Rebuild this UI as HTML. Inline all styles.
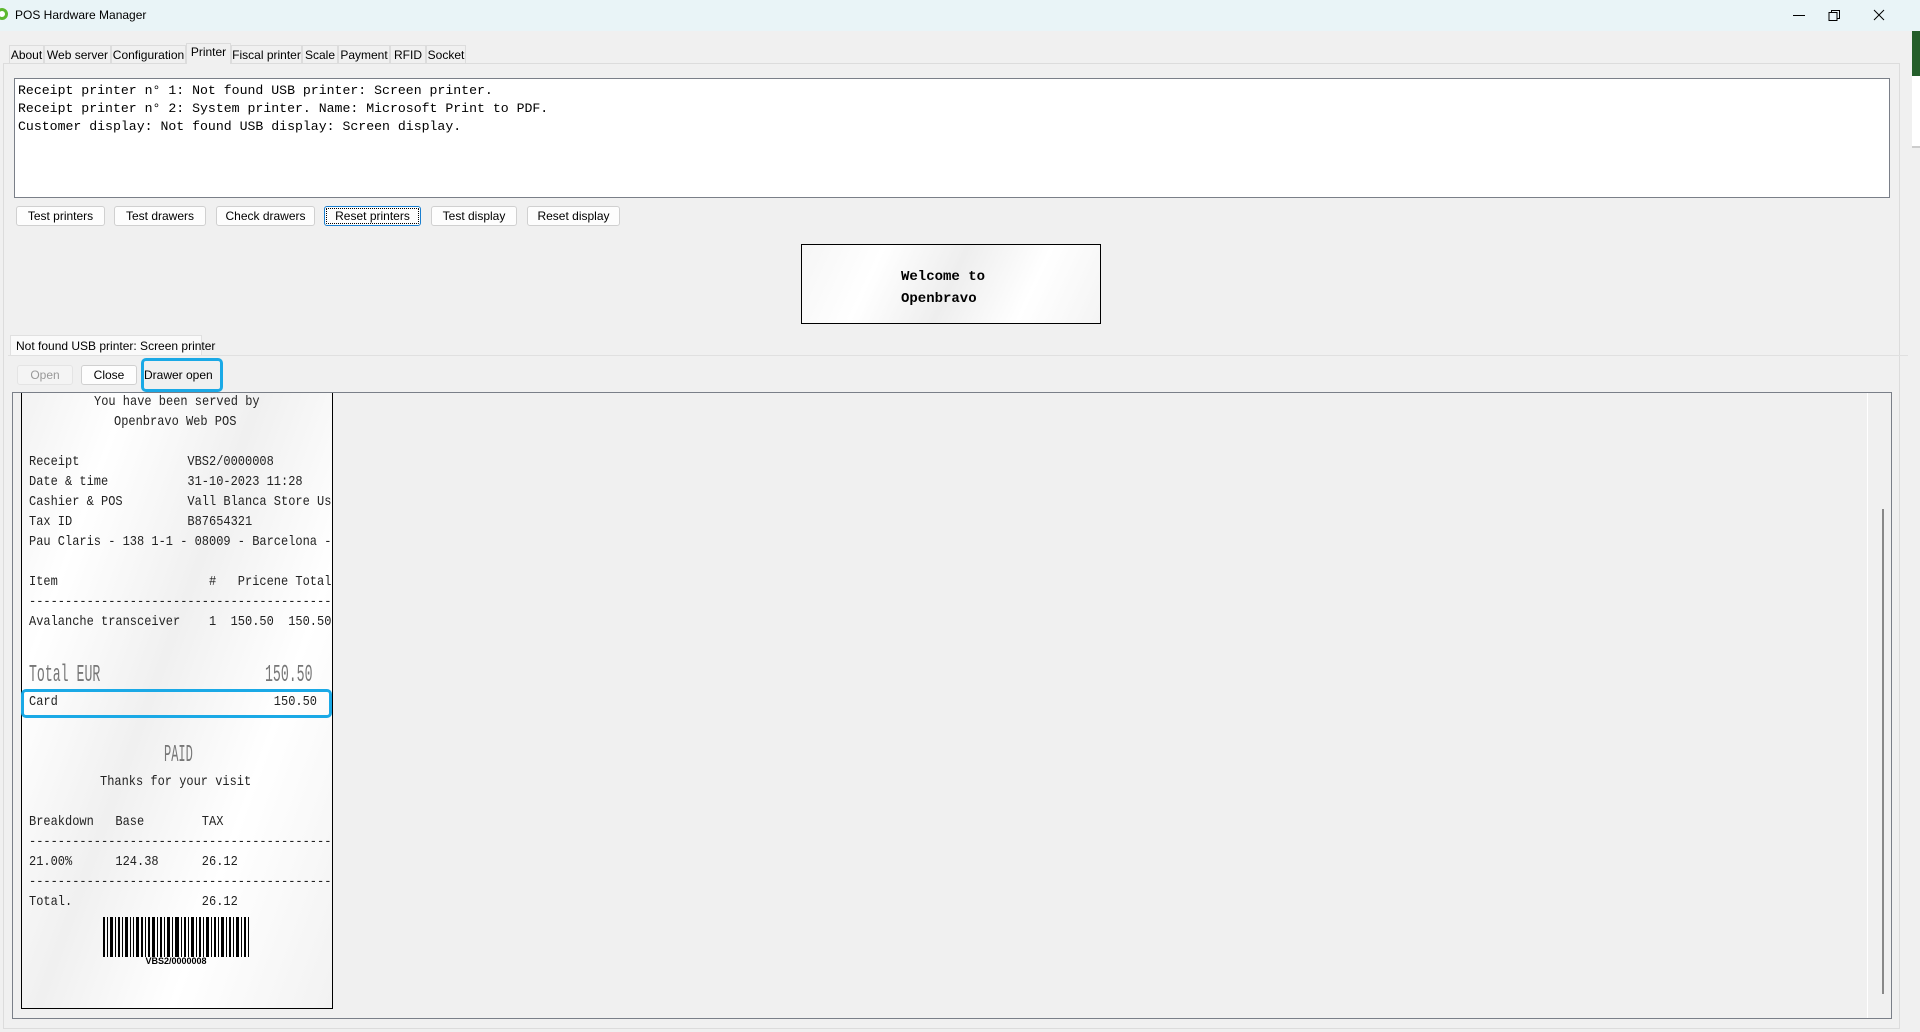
<!DOCTYPE html>
<html><head><style>
*{margin:0;padding:0;box-sizing:border-box}
body{width:1920px;height:1032px;background:#f0f0f0;position:relative;overflow:hidden;font-family:"Liberation Sans",sans-serif;font-size:12px;color:#000}
.a{position:absolute}
.title{left:0;top:0;width:1920px;height:31px;background:#e9f4f7}
.tab{position:absolute;top:45px;height:19px;background:#f0f0f0;border:1px solid #dcdcdc;border-bottom:none;text-align:center;line-height:18px;font-size:12px;white-space:nowrap}
.btn{position:absolute;height:20px;background:#fdfdfd;border:1px solid #d0d0d0;border-radius:3px;text-align:center;line-height:18px;font-size:12px;white-space:nowrap}
.rc{font-family:"Liberation Mono",monospace;font-size:14px;white-space:pre;position:absolute;left:29px;color:#222;line-height:16px;transform:scaleX(0.857);transform-origin:left}
.cw{width:353px;overflow:hidden}
</style></head><body>
<div class="a title"></div>
<div class="a" style="left:-4px;top:8px;width:12px;height:12px;border-radius:50%;border:3px solid #5cb82e;background:#fff"></div>
<div class="a" style="left:15px;top:8px;font-size:12px">POS Hardware Manager</div>
<svg class="a" style="left:1790px;top:8px" width="120" height="16"><path d="M3 7.5h12" stroke="#000" stroke-width="1"/><rect x="39" y="4.5" width="8" height="8" fill="none" stroke="#000"/><path d="M41.5 4.5v-2h8v8h-2" fill="none" stroke="#000"/><path d="M84 2l10 10M94 2l-10 10" stroke="#000" stroke-width="1"/></svg>
<div class="a" style="left:1912px;top:31px;width:8px;height:45px;background:#245e2a"></div>
<div class="a" style="left:1912px;top:76px;width:8px;height:70px;background:#fff"></div>
<div class="a" style="left:1912px;top:146px;width:8px;height:2px;background:#ccc"></div>

<div class="tab" style="left:9px;width:35px">About</div>
<div class="tab" style="left:44px;width:67px">Web server</div>
<div class="tab" style="left:111px;width:75px">Configuration</div>
<div class="tab" style="left:186px;width:45px;top:43px;height:21px;z-index:2;line-height:16px">Printer</div>
<div class="tab" style="left:231px;width:71px">Fiscal printer</div>
<div class="tab" style="left:302px;width:36px">Scale</div>
<div class="tab" style="left:338px;width:52px">Payment</div>
<div class="tab" style="left:390px;width:36px">RFID</div>
<div class="tab" style="left:426px;width:40px">Socket</div>
<div class="a" style="left:3px;top:63px;width:1897px;height:966px;border:1px solid #dcdcdc;background:#f0f0f0"></div>

<div class="a" style="left:14px;top:78px;width:1876px;height:120px;background:#fff;border:1px solid #7a7f88;font-family:'Liberation Mono',monospace;font-size:13.2px;line-height:18px;padding:3px 0 0 3px;white-space:pre">Receipt printer n° 1: Not found USB printer: Screen printer.
Receipt printer n° 2: System printer. Name: Microsoft Print to PDF.
Customer display: Not found USB display: Screen display.</div>

<div class="btn" style="left:16px;top:206px;width:89px">Test printers</div>
<div class="btn" style="left:114px;top:206px;width:92px">Test drawers</div>
<div class="btn" style="left:216px;top:206px;width:99px">Check drawers</div>
<div class="btn" style="left:324px;top:206px;width:97px;border:1px solid #1a7fd0;outline:1px dotted #000;outline-offset:-3px">Reset printers</div>
<div class="btn" style="left:431px;top:206px;width:86px">Test display</div>
<div class="btn" style="left:527px;top:206px;width:93px">Reset display</div>

<div class="a" style="left:801px;top:244px;width:300px;height:80px;border:1px solid #000;background:linear-gradient(115deg,#f6f6f6,#fff 25%,#eee 50%,#fff 75%,#f4f4f4)"></div>
<div class="a" style="left:901px;top:266px;font-family:'Liberation Mono',monospace;font-size:14px;font-weight:bold;line-height:22px;white-space:pre">Welcome to
Openbravo</div>

<div class="a" style="left:10px;top:335px;width:192px;height:21px;background:#fafafa;border:1px solid #e0e0e0;border-bottom:none;line-height:20px;padding-left:5px;font-size:12px;white-space:nowrap">Not found USB printer: Screen printer</div>
<div class="a" style="left:8px;top:355px;width:1900px;height:672px;border-top:1px solid #e0e0e0"></div>
<div class="btn" style="left:17px;top:365px;width:56px;color:#999;border-color:#e4e4e4;background:#f4f4f4">Open</div>
<div class="btn" style="left:81px;top:365px;width:56px">Close</div>
<div class="a" style="left:141px;top:358px;width:82px;height:34px;border:3px solid #1aa9e6;border-radius:5px;line-height:28px;font-size:12px;white-space:nowrap">Drawer open</div>

<div class="a" style="left:12px;top:392px;width:1880px;height:627px;border:1px solid #7a7f88;background:#f0f0f0;overflow:hidden">
<div class="a" style="left:1854px;top:0;width:1px;height:625px;background:#fff"></div>
<div class="a" style="left:1869px;top:116px;width:2px;height:485px;background:#888"></div>
<div class="a" style="left:8px;top:-5px;width:312px;height:621px;border:1px solid #000;background:linear-gradient(110deg,#f2f2f2,#fff 20%,#f0f0f0 45%,#fff 70%,#f2f2f2)"></div>
</div>
<div class="a" style="left:0;top:0">
<div class="rc" style="top:394px;left:94px">You have been served by</div>
<div class="rc" style="top:414px;left:114px">Openbravo Web POS</div>
<div class="rc" style="top:454px">Receipt               VBS2/0000008</div>
<div class="rc" style="top:474px">Date &amp; time           31-10-2023 11:28</div>
<div class="rc cw" style="top:494px">Cashier &amp; POS         Vall Blanca Store User</div>
<div class="rc" style="top:514px">Tax ID                B87654321</div>
<div class="rc cw" style="top:534px">Pau Claris - 138 1-1 - 08009 - Barcelona - </div>
<div class="rc cw" style="top:574px">Item                     #   Pricene Total</div>
<div class="rc cw" style="top:594px">------------------------------------------</div>
<div class="rc cw" style="top:614px">Avalanche transceiver    1  150.50  150.50</div>
<div class="rc" style="top:662px;font-size:24px;line-height:28px;color:#777;transform:scaleX(0.55)">Total EUR</div>
<div class="rc" style="top:662px;left:265px;font-size:24px;line-height:28px;color:#777;transform:scaleX(0.55)">150.50</div>
<div class="rc" style="top:694px">Card                              150.50</div>
<div class="rc" style="top:742px;left:164px;font-size:24px;line-height:28px;color:#777;transform:scaleX(0.5)">PAID</div>
<div class="rc" style="top:774px;left:100px">Thanks for your visit</div>
<div class="rc" style="top:814px">Breakdown   Base        TAX</div>
<div class="rc cw" style="top:834px">------------------------------------------</div>
<div class="rc" style="top:854px">21.00%      124.38      26.12</div>
<div class="rc cw" style="top:874px">------------------------------------------</div>
<div class="rc" style="top:894px">Total.                  26.12</div>
</div>
<div class="a" style="left:21px;top:689px;width:311px;height:29px;border:3px solid #1aa9e6;border-radius:5px"></div>
<svg class="a" style="left:103px;top:917px" width="146" height="40"><g fill="#000">
<rect x="0" width="2" height="40"/><rect x="4" width="1" height="40"/><rect x="7" width="3" height="40"/><rect x="12" width="1" height="40"/><rect x="15" width="2" height="40"/><rect x="19" width="1" height="40"/><rect x="22" width="3" height="40"/><rect x="27" width="1" height="40"/><rect x="30" width="1" height="40"/><rect x="33" width="3" height="40"/><rect x="38" width="2" height="40"/><rect x="42" width="1" height="40"/><rect x="45" width="2" height="40"/><rect x="49" width="3" height="40"/><rect x="54" width="1" height="40"/><rect x="57" width="2" height="40"/><rect x="61" width="1" height="40"/><rect x="64" width="3" height="40"/><rect x="69" width="1" height="40"/><rect x="72" width="4" height="40"/><rect x="78" width="1" height="40"/><rect x="81" width="2" height="40"/><rect x="85" width="1" height="40"/><rect x="88" width="3" height="40"/><rect x="93" width="1" height="40"/><rect x="96" width="2" height="40"/><rect x="100" width="1" height="40"/><rect x="103" width="3" height="40"/><rect x="108" width="1" height="40"/><rect x="111" width="2" height="40"/><rect x="115" width="1" height="40"/><rect x="118" width="3" height="40"/><rect x="123" width="1" height="40"/><rect x="126" width="2" height="40"/><rect x="130" width="1" height="40"/><rect x="133" width="3" height="40"/><rect x="138" width="1" height="40"/><rect x="141" width="2" height="40"/><rect x="145" width="1" height="40"/></g></svg>
<div class="a" style="left:103px;top:956px;width:146px;text-align:center;font-size:9px;font-weight:bold">VBS2/0000008</div>
</body></html>
